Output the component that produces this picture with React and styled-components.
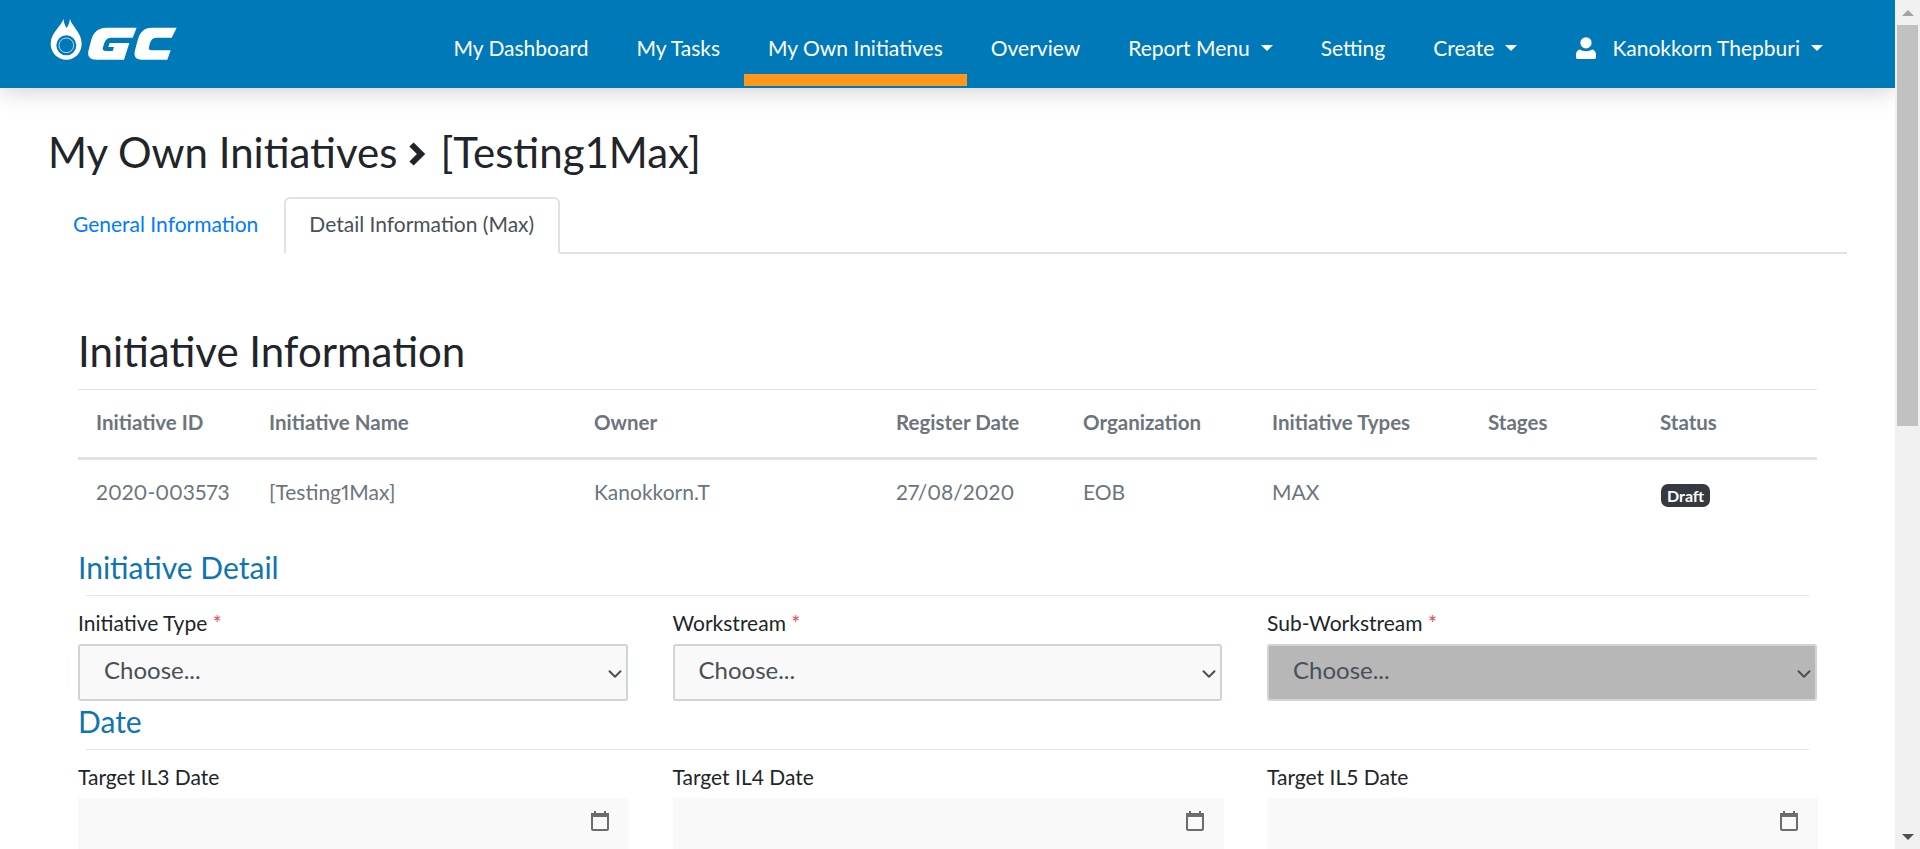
import React from 'react'
import styled, { createGlobalStyle } from 'styled-components'
import { ChevronDown } from 'lucide-react'

const GlobalStyle = createGlobalStyle`
  * { box-sizing: border-box; }
  body {
    margin: 0;
    background: #fff;
    color: #212529;
    font-family: Lato, "Open Sans", sans-serif;
    font-size: 21px;
  }
`

const navLinks = [
  { label: 'My Dashboard' },
  { label: 'My Tasks' },
  { label: 'My Own Initiatives', active: true },
  { label: 'Overview' },
  { label: 'Report Menu', caret: true },
  { label: 'Setting' },
  { label: 'Create', caret: true },
]

const columns = [
  { title: 'Initiative ID', value: '2020-003573', width: 173 },
  { title: 'Initiative Name', value: '[Testing1Max]', width: 325 },
  { title: 'Owner', value: 'Kanokkorn.T', width: 302 },
  { title: 'Register Date', value: '27/08/2020', width: 187 },
  { title: 'Organization', value: 'EOB', width: 189 },
  { title: 'Initiative Types', value: 'MAX', width: 216 },
  { title: 'Stages', value: '', width: 172 },
  { title: 'Status', badge: 'Draft', width: 175 },
]

const Logo = () => (
  <svg width="130" height="45" viewBox="150 50 390 135">
    <path fill="#fff" fillRule="evenodd" d="M190 55c2 14 6 22 10 28 4-6 8-14 10-28 4 22 35 40 35 75 0 27-20 48-46 48s-47-21-47-48c0-35 34-53 38-75Zm9 50a30 30 0 1 0 0 60 30 30 0 0 0 0-60Z" />
    <circle cx="199" cy="135" r="22" fill="none" stroke="#fff" strokeWidth="3" opacity=".7" />
    <path fill="#fff" d="M320 82H410L398 112H335Q318 112 313 128L309 141Q305 152 318 152H338L342 140H325L329 128H388L372 178H290Q258 178 266 148L274 118Q284 82 320 82Z" />
    <path fill="#fff" d="M455 82H530L515 112H470Q455 112 450 128L447 140Q444 150 456 150H512L502 178H425Q398 178 405 150L413 120Q422 82 455 82Z" />
  </svg>
)

const User = () => (
  <svg width="20" height="22" viewBox="0 0 20 22" fill="#fff">
    <circle cx="10" cy="5.800" r="5.600" />
    <path d="M4 12.500c1.500 1 3.500 1.700 6 1.700s4.500-.7 6-1.700c2.500.4 4 2.500 4 5v2.700c0 1-.8 1.800-1.800 1.800H1.800C.8 22 0 21.200 0 20.200v-2.700c0-2.500 1.500-4.600 4-5Z" />
  </svg>
)

const Calendar = () => (
  <svg width="18" height="20" viewBox="0 0 18 20" fill="none">
    <path fill="#6c6c6c" d="M3 0h2v3H3zM13 0h2v3h-2zM0 2h18v4H0z" />
    <rect x="1" y="3" width="16" height="16" rx="1.500" stroke="#6c6c6c" strokeWidth="2" />
  </svg>
)

const App = () => {
  return (
    <>
      <GlobalStyle />
      <Shell>
        <Main>
          <Navbar>
            <Logo />
            <NavList>
              {navLinks.map((link) => (
                <NavLink key={link.label} $active={link.active}>
                  {link.label}
                  {link.caret && <Caret />}
                </NavLink>
              ))}
              <UserLink>
                <User />
                Kanokkorn Thepburi
                <Caret />
              </UserLink>
            </NavList>
          </Navbar>
          <Page>
            <PageTitle>
              My Own Initiatives
              <Chevron viewBox="0 0 20 24">
                <path d="M3.500 2.500L13 12l-9.500 9.500" />
              </Chevron>
              [Testing1Max]
            </PageTitle>
            <Tabs>
              <Tab>General Information</Tab>
              <Tab $active>Detail Information (Max)</Tab>
            </Tabs>
            <Content>
              <SectionTitle>Initiative Information</SectionTitle>
              <InfoTable>
                <thead>
                  <tr>
                    {columns.map((col) => (
                      <HeadCell key={col.title} style={{ width: col.width }}>{col.title}</HeadCell>
                    ))}
                  </tr>
                </thead>
                <tbody>
                  <tr>
                    {columns.map((col) => (
                      <BodyCell key={col.title}>
                        {col.badge ? <Badge>{col.badge}</Badge> : col.value}
                      </BodyCell>
                    ))}
                  </tr>
                </tbody>
              </InfoTable>
              <GroupTitle>Initiative Detail</GroupTitle>
              <Divider />
              <FormRow>
                <Field>
                  <Label>Initiative Type <Required>*</Required></Label>
                  <SelectBox>Choose...<ChevronDown size={22} strokeWidth={2.200} /></SelectBox>
                </Field>
                <Field>
                  <Label>Workstream <Required>*</Required></Label>
                  <SelectBox>Choose...<ChevronDown size={22} strokeWidth={2.200} /></SelectBox>
                </Field>
                <Field>
                  <Label>Sub-Workstream <Required>*</Required></Label>
                  <SelectBox $disabled>Choose...<ChevronDown size={22} strokeWidth={2.200} /></SelectBox>
                </Field>
              </FormRow>
              <GroupTitle $tight>Date</GroupTitle>
              <Divider />
              <FormRow>
                <Field>
                  <Label>Target IL3 Date</Label>
                  <DateBox><Calendar /></DateBox>
                </Field>
                <Field>
                  <Label>Target IL4 Date</Label>
                  <DateBox><Calendar /></DateBox>
                </Field>
                <Field>
                  <Label>Target IL5 Date</Label>
                  <DateBox><Calendar /></DateBox>
                </Field>
              </FormRow>
            </Content>
          </Page>
        </Main>
        <ScrollBar>
          <ScrollArrow><ArrowUp /></ScrollArrow>
          <ScrollTrack><ScrollThumb /></ScrollTrack>
          <ScrollArrow><ArrowDown /></ScrollArrow>
        </ScrollBar>
      </Shell>
    </>
  )
}

export default App

const Shell = styled.div`
  display: flex;
  height: 100vh;
  overflow: hidden;
`
const Main = styled.div`
  flex: 1;
  min-width: 0;
  overflow: hidden;
`
const ScrollBar = styled.aside`
  width: 25px;
  flex: none;
  display: flex;
  flex-direction: column;
  background: #f1f1f1;
`
const ScrollArrow = styled.div`
  height: 25px;
  display: flex;
  align-items: center;
  justify-content: center;
`
const ArrowUp = styled.span`
  width: 0;
  height: 0;
  border-bottom: 6px solid #a3a3a3;
  border-left: 6px solid transparent;
  border-right: 6px solid transparent;
`
const ArrowDown = styled.span`
  width: 0;
  height: 0;
  border-top: 6px solid #505050;
  border-left: 6px solid transparent;
  border-right: 6px solid transparent;
`
const ScrollTrack = styled.div`
  flex: 1;
  padding: 0 2px;
`
const ScrollThumb = styled.div`
  height: 401px;
  background: #c1c1c1;
`
const Navbar = styled.header`
  height: 88px;
  background: #0079b9;
  display: flex;
  align-items: flex-start;
  justify-content: space-between;
  padding: 17px 48px 0 50px;
  box-shadow: 0 2px 24px rgba(0, 0, 0, 0.2);
  position: relative;
`
const NavList = styled.nav`
  display: flex;
  margin-top: -17px;
`
const NavLink = styled.a`
  display: flex;
  align-items: center;
  color: #fff;
  font-size: 21px;
  padding: 21px 24px 0;
  height: 86px;
  border-bottom: 12px solid ${(p) => (p.$active ? '#ff971d' : 'transparent')};
`
const UserLink = styled(NavLink)`
  margin-left: 11px;
  svg { margin-right: 16px; }
`
const Caret = styled.span`
  width: 0;
  height: 0;
  margin-left: 11px;
  border-top: 6px solid #fff;
  border-left: 6.500px solid transparent;
  border-right: 6.500px solid transparent;
`
const Page = styled.main`
  padding: 0 48px;
`
const PageTitle = styled.h1`
  margin: 0;
  padding-top: 39px;
  display: flex;
  align-items: center;
  font-size: 42px;
  font-weight: 400;
  line-height: 50px;
`
const Chevron = styled.svg`
  width: 20px;
  height: 24px;
  margin: 3px 12px 0 11px;
  fill: none;
  stroke: #212529;
  stroke-width: 6;
`
const Tabs = styled.div`
  display: flex;
  margin-top: 20px;
  height: 57px;
  border-bottom: 2px solid #dee2e6;
`
const Tab = styled.div`
  padding: 0 24px 5px 23px;
  height: 57px;
  display: flex;
  align-items: center;
  font-size: 21px;
  white-space: nowrap;
  color: ${(p) => (p.$active ? '#495057' : '#007bff')};
  background: #fff;
  border: 2px solid ${(p) => (p.$active ? '#dee2e6' : 'transparent')};
  border-bottom-color: ${(p) => (p.$active ? '#fff' : 'transparent')};
  border-radius: 6px 6px 0 0;
`
const Content = styled.section`
  padding: 0 30px;
`
const SectionTitle = styled.h2`
  margin: 72px 0 0;
  font-size: 42px;
  font-weight: 400;
  line-height: 50px;
  padding-bottom: 13px;
  border-bottom: 1px solid #dee2e6;
`
const InfoTable = styled.table`
  width: 100%;
  border-collapse: collapse;
  table-layout: fixed;
  color: #6c757d;
  font-variant-numeric: proportional-nums;
`
const HeadCell = styled.th`
  text-align: left;
  font-size: 20.500px;
  font-weight: 700;
  height: 68px;
  padding: 0 18px 2px;
  border-bottom: 3px solid #dee2e6;
`
const BodyCell = styled.td`
  height: 68px;
  padding: 0 18px 2px;
  font-size: 21px;
`
const Badge = styled.span`
  display: inline-block;
  margin-left: 1px;
  background: #343a40;
  color: #fff;
  font-size: 16px;
  font-weight: 700;
  line-height: 23px;
  padding: 0 6px;
  border-radius: 7px;
  transform: translateY(2px);
`
const GroupTitle = styled.h3`
  margin: ${(p) => (p.$tight ? '2px' : '23px')} 0 0;
  font-size: 30px;
  font-weight: 400;
  line-height: 36px;
  color: #0f75b0;
  padding-bottom: 10px;
`
const Divider = styled.div`
  height: 1px;
  margin: 0 8px;
  background: #e2e4e6;
`
const FormRow = styled.div`
  display: grid;
  grid-template-columns: repeat(3, 549.500px);
  column-gap: 45px;
  margin-top: 15px;
`
const Field = styled.div`
  display: flex;
  flex-direction: column;
`
const Label = styled.label`
  font-size: 21px;
  line-height: 24px;
  margin-bottom: 9px;
`
const Required = styled.span`
  color: #e04b5a;
`
const SelectBox = styled.div`
  height: 57px;
  display: flex;
  align-items: center;
  justify-content: space-between;
  padding: 0 0 6px 24px;
  font-size: 24px;
  color: #495057;
  background: ${(p) => (p.$disabled ? '#b7b7b7' : '#f9f9f9')};
  border: 2px solid #ced4da;
  border-radius: 3px;
  svg { margin-top: 8px; }
`
const DateBox = styled.div`
  width: 551px;
  height: 60px;
  display: flex;
  justify-content: flex-end;
  align-items: flex-start;
  padding: 13px 20px 0 0;
  background: #f9f9f9;
`
